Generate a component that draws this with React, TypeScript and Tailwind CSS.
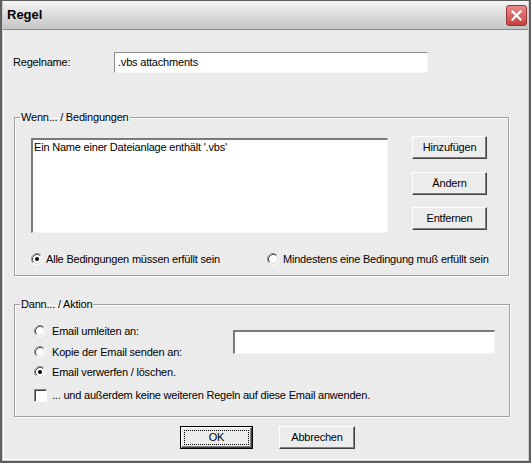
import React from "react";

function Radio({ checked }: { checked?: boolean }) {
    return (
        <svg width="12" height="12" viewBox="0 0 12 12" className="shrink-0">
            <circle cx="6" cy="6" r="5" fill="#fff" />
            <path d="M2.11 9.89 A5.5 5.5 0 0 1 9.89 2.11" fill="none" stroke="#8a8a8a" strokeWidth="1" />
            <path d="M2.82 9.18 A4.5 4.5 0 0 1 9.18 2.82" fill="none" stroke="#4a4a4a" strokeWidth="1" />
            <path d="M9.89 2.11 A5.5 5.5 0 0 1 2.11 9.89" fill="none" stroke="#ffffff" strokeWidth="1" />
            <path d="M9.18 2.82 A4.5 4.5 0 0 1 2.82 9.18" fill="none" stroke="#dcdcdc" strokeWidth="1" />
            {checked && <circle cx="6" cy="6" r="2" fill="#000" />}
        </svg>
    );
}

function Btn({ label, width, isDefault }: { label: string; width: string; isDefault?: boolean }) {
    if (isDefault) {
        return (
            <div className={`${width} h-[23px] border border-black flex`}>
                <div className="flex-1 flex border-t border-l border-white border-b border-r border-b-[#404040] border-r-[#404040] bg-[#ececec] shadow-[inset_-1px_-1px_0_#808080] p-[2px]">
                    <div className="flex-1 flex items-center justify-center border border-dotted border-black text-[11px] leading-none text-black">
                        {label}
                    </div>
                </div>
            </div>
        );
    }
    return (
        <div className={`${width} h-[23px] flex items-center justify-center border-t border-l border-white border-b border-r border-b-[#404040] border-r-[#404040] bg-[#ececec] shadow-[inset_-1px_-1px_0_#808080] text-[11px] leading-none text-black`}>
            {label}
        </div>
    );
}

export default function App() {
    return (
        <div className="w-[531px] h-[463px] bg-[#5e5e5e] pt-px px-[2px] pb-[2px] flex font-['Liberation_Sans',Arial,sans-serif] text-[11px] tracking-[-0.2px] text-black">
            <div className="flex-1 flex flex-col border-x border-b border-[#cdcdcd]">
                {/* title bar */}
                <div className="h-[28px] flex items-center justify-between pl-[4px] pr-[1px] bg-gradient-to-b from-[#f6f6f6] via-[#dcdcdc] to-[#c4c4c4]">
                    <span className="text-[13px] font-bold tracking-normal text-black">Regel</span>
                    <div className="w-[21px] h-[21px] rounded-[3px] border border-[#9b3434] bg-gradient-to-b from-[#ec8a8a] to-[#c54040] flex items-center justify-center">
                        <svg width="11" height="11" viewBox="0 0 11 11">
                            <path d="M1.5 1.5 L9.5 9.5 M9.5 1.5 L1.5 9.5" stroke="#fff" strokeWidth="2.2" strokeLinecap="square" />
                        </svg>
                    </div>
                </div>
                <div className="h-px bg-[#8585b5]" />

                {/* client */}
                <div className="flex-1 flex flex-col bg-[#ebebeb] border-l border-b border-white">
                    <div className="mt-[22px] ml-[9px] flex items-center">
                        <span className="w-[101px]">Regelname:</span>
                        <div className="w-[314px] h-[21px] bg-white border-t border-l border-[#8c8c8c] border-b border-r border-b-[#f4f4f4] border-r-[#f4f4f4] flex items-center pl-[3px]">
                            .vbs attachments
                        </div>
                    </div>

                    <fieldset className="mt-[38px] ml-[10px] w-[495px] h-[165px] border border-[#a0a0a0] shadow-[inset_1px_1px_0_#fff,1px_1px_0_#fff]">
                        <legend className="ml-[5px] px-[1px] leading-[13px]">Wenn... / Bedingungen</legend>
                        <div className="flex mt-[12px]">
                            <div className="ml-[16px] mt-[2px] w-[357px] h-[95px] bg-white border-t-2 border-l-2 border-[#7a7a7a] border-b border-r border-b-[#f4f4f4] border-r-[#f4f4f4] pl-[1px] pt-[1px] leading-[13px]">
                                Ein Name einer Dateianlage enthält '.vbs'
                            </div>
                            <div className="ml-[24px] flex flex-col">
                                <Btn label="Hinzufügen" width="w-[75px]" />
                                <div className="mt-[13px]"><Btn label="Ändern" width="w-[75px]" /></div>
                                <div className="mt-[12px]"><Btn label="Entfernen" width="w-[75px]" /></div>
                            </div>
                        </div>
                        <div className="flex items-center mt-[18px] h-[16px]">
                            <div className="ml-[16px] w-[236px] flex items-center">
                                <Radio checked />
                                <span className="ml-[3px]">Alle Bedingungen müssen erfüllt sein</span>
                            </div>
                            <div className="flex items-center">
                                <Radio />
                                <span className="ml-[4px]">Mindestens eine Bedingung muß erfüllt sein</span>
                            </div>
                        </div>
                    </fieldset>

                    <fieldset className="mt-[22px] ml-[10px] w-[496px] h-[119px] border border-[#a0a0a0] shadow-[inset_1px_1px_0_#fff,1px_1px_0_#fff]">
                        <legend className="ml-[5px] px-[1px] leading-[13px]">Dann... / Aktion</legend>
                        <div className="flex">
                            <div className="flex flex-col ml-[19px] mt-[12px]">
                                <div className="h-[16px] flex items-center">
                                    <Radio />
                                    <span className="ml-[6px]">Email umleiten an:</span>
                                </div>
                                <div className="h-[16px] mt-[5px] flex items-center">
                                    <Radio />
                                    <span className="ml-[6px]">Kopie der Email senden an:</span>
                                </div>
                            </div>
                            <div className="ml-auto mr-[14px] mt-[19px] w-[262px] h-[24px] bg-white border-t-2 border-l-2 border-[#7a7a7a] border-b border-r border-b-[#f4f4f4] border-r-[#f4f4f4]" />
                        </div>
                        <div className="h-[16px] mt-[4px] ml-[19px] flex items-center">
                            <Radio checked />
                            <span className="ml-[6px]">Email verwerfen / löschen.</span>
                        </div>
                        <div className="h-[16px] mt-[7px] ml-[19px] flex items-center">
                            <div className="w-[13px] h-[13px] bg-white border-t border-l border-[#8a8a8a] border-b border-r border-b-white border-r-white shadow-[inset_1px_1px_0_#404040]" />
                            <span className="ml-[5px]">... und außerdem keine weiteren Regeln auf diese Email anwenden.</span>
                        </div>
                    </fieldset>

                    <div className="mt-[9px] ml-[176px] flex gap-[26px]">
                        <Btn label="OK" width="w-[73px]" isDefault />
                        <Btn label="Abbrechen" width="w-[76px]" />
                    </div>
                </div>
            </div>
        </div>
    );
}
